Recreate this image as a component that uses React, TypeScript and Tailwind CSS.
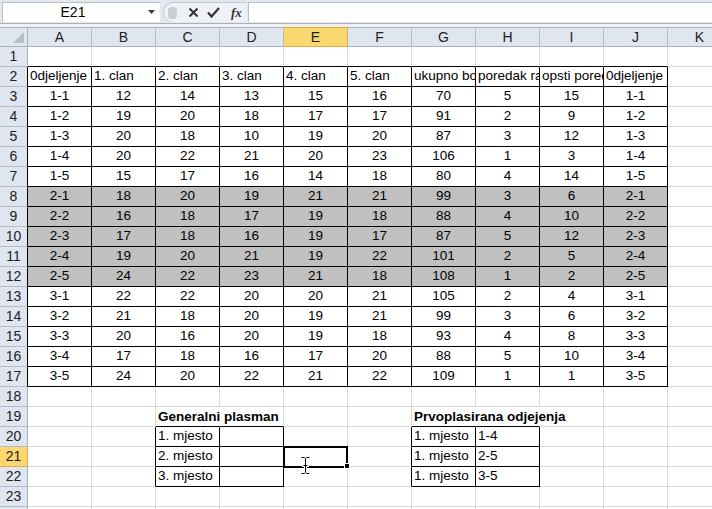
import React from 'react';

const COLS = ['A', 'B', 'C', 'D', 'E', 'F', 'G', 'H', 'I', 'J', 'K'];

const DATA: string[][] = [
  ['1-1', '12', '14', '13', '15', '16', '70', '5', '15', '1-1'],
  ['1-2', '19', '20', '18', '17', '17', '91', '2', '9', '1-2'],
  ['1-3', '20', '18', '10', '19', '20', '87', '3', '12', '1-3'],
  ['1-4', '20', '22', '21', '20', '23', '106', '1', '3', '1-4'],
  ['1-5', '15', '17', '16', '14', '18', '80', '4', '14', '1-5'],
  ['2-1', '18', '20', '19', '21', '21', '99', '3', '6', '2-1'],
  ['2-2', '16', '18', '17', '19', '18', '88', '4', '10', '2-2'],
  ['2-3', '17', '18', '16', '19', '17', '87', '5', '12', '2-3'],
  ['2-4', '19', '20', '21', '19', '22', '101', '2', '5', '2-4'],
  ['2-5', '24', '22', '23', '21', '18', '108', '1', '2', '2-5'],
  ['3-1', '22', '22', '20', '20', '21', '105', '2', '4', '3-1'],
  ['3-2', '21', '18', '20', '19', '21', '99', '3', '6', '3-2'],
  ['3-3', '20', '16', '20', '19', '18', '93', '4', '8', '3-3'],
  ['3-4', '17', '18', '16', '17', '20', '88', '5', '10', '3-4'],
  ['3-5', '24', '20', '22', '21', '22', '109', '1', '1', '3-5'],
];

const HEAD = ['0djeljenje', '1. clan', '2. clan', '3. clan', '4. clan', '5. clan', 'ukupno bo', 'poredak ra', 'opsti pored', '0djeljenje'];

type CellInfo = { t?: string; left?: boolean; bold?: boolean; over?: boolean };

function cellInfo(r: number, c: number): CellInfo {
  if (r === 2 && c <= 9) return { t: HEAD[c], left: true };
  if (r >= 3 && r <= 17 && c <= 9) return { t: DATA[r - 3][c] };
  if (r === 19 && c === 2) return { t: 'Generalni plasman', left: true, bold: true, over: true };
  if (r === 19 && c === 6) return { t: 'Prvoplasirana odjejenja', left: true, bold: true, over: true };
  if (r >= 20 && r <= 22 && c === 2) return { t: `${r - 19}. mjesto`, left: true };
  if (r >= 20 && r <= 22 && c === 6) return { t: '1. mjesto', left: true };
  if (c === 7 && r >= 20 && r <= 22) return { t: ['1-4', '2-5', '3-5'][r - 20], left: true };
  return {};
}

function inBox(r: number, c: number) {
  return (
    (r >= 2 && r <= 17 && c >= 0 && c <= 9) ||
    (r >= 20 && r <= 22 && (c === 2 || c === 3)) ||
    (r >= 20 && r <= 22 && (c === 6 || c === 7))
  );
}

function hideRight(r: number, c: number) {
  return r === 19 && (c === 2 || c === 6 || c === 7);
}

function Cursor() {
  return (
    <svg className="absolute left-[16px] top-[9px] z-20" width="11" height="19" viewBox="0 0 11 19">
      <path d="M1.5 1.5h3l1 1 1-1h3M5.5 2.5v14M1.5 17.5h3l1-1 1 1h3M3.5 9.5h4" fill="none" stroke="#fff" strokeWidth="3" strokeLinecap="square" />
      <path d="M1.5 1.5h3l1 1 1-1h3M5.5 2.5v14M1.5 17.5h3l1-1 1 1h3M3.5 9.5h4" fill="none" stroke="#000" strokeWidth="1" />
    </svg>
  );
}

function Cell({ r, c }: { r: number; c: number }) {
  const info = cellInfo(r, c);
  const gray = r >= 8 && r <= 12 && c <= 9;
  const rb = hideRight(r, c) ? 'border-r-white' : inBox(r, c) || inBox(r, c + 1) ? 'border-r-black' : 'border-r-[#d9d9d9]';
  const bb = inBox(r, c) || inBox(r + 1, c) ? 'border-b-black' : 'border-b-[#d9d9d9]';
  const bg = gray ? 'bg-[#c0c0c0]' : 'bg-white';
  const align = info.left ? 'justify-start pl-[2px]' : 'justify-center';
  const ov = info.over || (r === 21 && c === 4) ? 'overflow-visible z-10' : 'overflow-hidden';
  const weight = info.bold ? 'font-bold text-[13.5px] pt-[1px]' : 'text-[13.5px]';
  return (
    <div className={`relative flex items-center whitespace-nowrap border-r border-b ${rb} ${bb} ${bg} ${align} ${ov} ${weight} text-black`}>
      {info.t}
      {r === 21 && c === 4 && (
        <>
          <div className="absolute -left-[1px] -top-[1px] w-[65px] h-[22px] border-2 border-black" />
          <div className="absolute -right-[3px] -bottom-[3px] w-[6px] h-[6px] bg-black border border-white" />
          <Cursor />
        </>
      )}
    </div>
  );
}

export default function App() {
  const rows = Array.from({ length: 24 }, (_, i) => i + 1);
  return (
    <div className="w-[712px] h-[509px] overflow-hidden bg-white font-['Liberation_Sans',Arial,sans-serif] text-black">
      {/* Formula bar */}
      <div className="h-[24px] flex items-stretch bg-[#e3e8ee] border-b border-[#aab1ba] pt-[2px] pb-[1px]">
        <div className="ml-[2px] w-[158px] flex bg-white border-l border-t border-[#b8c0ca]">
          <div className="w-[140px] flex items-center justify-center text-[14px]">E21</div>
          <div className="flex-1 flex items-center justify-center">
            <svg width="8" height="5" viewBox="0 0 8 5"><path d="M0 0h7L3.5 4z" fill="#3a3a3a" /></svg>
          </div>
        </div>
        <div className="ml-[3px] w-[84px] flex items-center rounded-l-full bg-[#eef1f5] border-l border-t border-[#c3c9d1]">
          <div className="ml-[4px] w-[9px] h-[12px] rounded-[4px] bg-[#c9ced5]" />
          <div className="ml-[11px] flex items-center gap-[8px]">
            <svg width="11" height="11" viewBox="0 0 11 11"><path d="M1.5 1.5l8 8M9.5 1.5l-8 8" stroke="#333" strokeWidth="2" /></svg>
            <svg width="13" height="11" viewBox="0 0 13 11"><path d="M1 5.5l3.5 4L12 1" fill="none" stroke="#333" strokeWidth="2.2" /></svg>
            <span className="ml-[3px] text-[13px] font-bold italic font-['Liberation_Serif',serif] text-[#333] leading-none">fx</span>
          </div>
        </div>
        <div className="ml-[1px] flex-1 bg-white border-l border-t border-[#b8c0ca]" />
      </div>
      <div className="h-[3px] bg-[#eef0f3]" />
      {/* Grid */}
      <div className="grid grid-cols-[28px_repeat(11,64px)] auto-rows-[20px]">
        <div className="relative bg-[#dfe6ef] border-t border-r border-b border-[#a9b3bf]">
          <svg className="absolute right-[3px] bottom-[3px]" width="11" height="11" viewBox="0 0 11 11"><path d="M11 0v11H0z" fill="#b7bec8" /></svg>
        </div>
        {COLS.map((L, c) =>
          c === 4 ? (
            <div key={L} className="flex items-center justify-center text-[14px] text-[#222] bg-[#f9d86f] border-t border-r border-b border-[#e9a93e]">{L}</div>
          ) : (
            <div key={L} className="flex items-center justify-center text-[14px] text-[#222] bg-[#dfe6ef] border-t border-r border-b border-t-[#a9b3bf] border-r-[#b3bcc7] border-b-[#a9b3bf]">{L}</div>
          )
        )}
        {rows.map((r) => (
          <React.Fragment key={r}>
            {r === 21 ? (
              <div className="flex items-center justify-center text-[14px] text-[#222] bg-[#f9d86f] border-r border-b border-[#e9a93e]">{r}</div>
            ) : (
              <div className={`flex items-center justify-center text-[14px] text-[#222] bg-[#dfe6ef] border-r border-b border-b-[#b3bcc7] ${inBox(r, 0) ? 'border-r-black' : 'border-r-[#a9b3bf]'}`}>{r}</div>
            )}
            {COLS.map((_, c) => (
              <Cell key={c} r={r} c={c} />
            ))}
          </React.Fragment>
        ))}
      </div>
    </div>
  );
}
